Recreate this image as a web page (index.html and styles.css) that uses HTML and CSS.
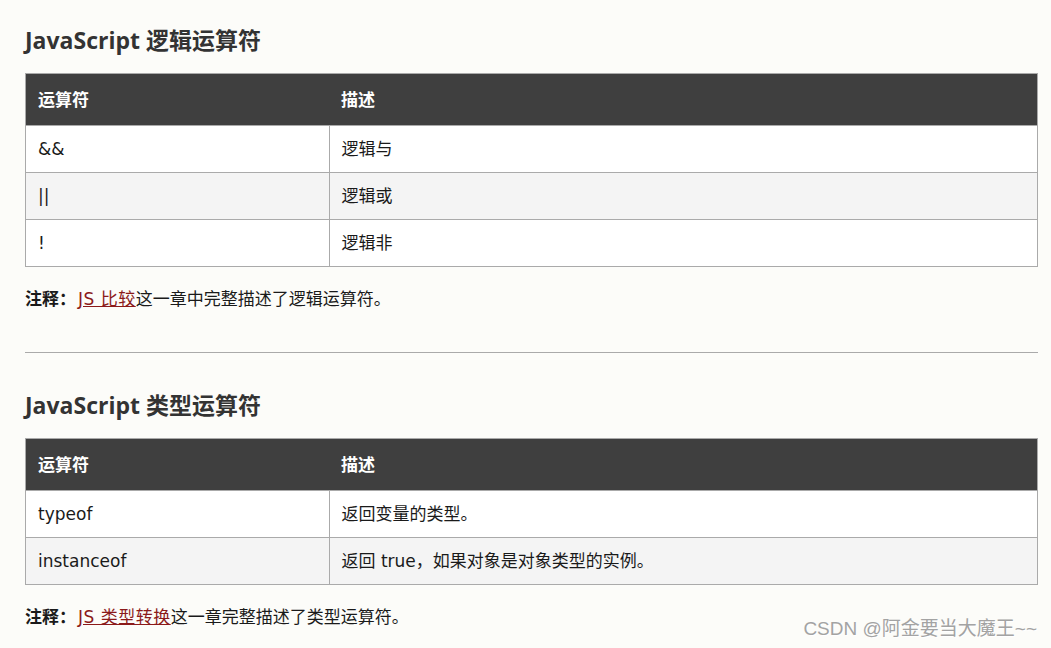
FILE: index.html
```html
<!DOCTYPE html>
<html lang="zh-CN">
<head>
<meta charset="utf-8">
<title>JavaScript 运算符</title>
<link rel="stylesheet" href="styles.css">
</head>
<body>
<main class="page">
  <h2 class="title">JavaScript 逻辑运算符</h2>
  <table class="ops">
    <thead>
      <tr><th class="col-op">运算符</th><th>描述</th></tr>
    </thead>
    <tbody>
      <tr><td>&amp;&amp;</td><td>逻辑与</td></tr>
      <tr class="alt"><td>||</td><td>逻辑或</td></tr>
      <tr><td>!</td><td>逻辑非</td></tr>
    </tbody>
  </table>
  <p class="note"><b>注释：</b><a href="#" class="link">JS 比较</a>这一章中完整描述了逻辑运算符。</p>
  <hr class="sep">
  <h2 class="title">JavaScript 类型运算符</h2>
  <table class="ops">
    <thead>
      <tr><th class="col-op">运算符</th><th>描述</th></tr>
    </thead>
    <tbody>
      <tr><td>typeof</td><td>返回变量的类型。</td></tr>
      <tr class="alt"><td>instanceof</td><td>返回 true，如果对象是对象类型的实例。</td></tr>
    </tbody>
  </table>
  <p class="note"><b>注释：</b><a href="#" class="link">JS 类型转换</a>这一章完整描述了类型运算符。</p>
</main>
<div class="watermark">CSDN @阿金要当大魔王~~</div>
</body>
</html>
```

FILE: styles.css
```css
html, body {
  margin: 0;
  padding: 0;
  background: #fcfcf9;
}
body {
  font-family: "DejaVu Sans", "Noto Sans CJK SC", sans-serif;
  font-size: 17px;
  color: #1a1a1a;
  height: 648px;
  overflow: hidden;
  position: relative;
}
.page {
  padding: 22px 13px 0 25px;
}
.title {
  margin: 0 0 15px;
  font-family: "Open Sans", "Noto Sans CJK SC", sans-serif;
  font-size: 23px;
  line-height: 36px;
  font-weight: 700;
  color: #333;
}
.ops {
  width: 100%;
  border-collapse: collapse;
  border: 1px solid #aaa;
}
.ops th {
  background: #3f3f3f;
  color: #fff;
  font-weight: 700;
  text-align: left;
  padding: 14px 12px 13px;
  line-height: 24px;
  font-size: 17px;
}
.ops th.col-op {
  width: 279px;
}
.ops td {
  background: #fff;
  padding: 11px 12px 11px;
  line-height: 24px;
  border: 1px solid #aaa;
  color: #1a1a1a;
}
.ops tr.alt td {
  background: #f4f4f4;
}
.note {
  margin: 20px 0 0;
  line-height: 24px;
  color: #1a1a1a;
}
.note b {
  font-weight: 700;
  margin-right: 2px;
}
.link {
  color: #8b1a1a;
  text-decoration: underline;
  text-decoration-color: #8b1a1a;
  letter-spacing: 0.5px;
}
.sep {
  margin: 41px 0 34px;
  border: 0;
  border-top: 1px solid #aaa;
  height: 0;
}
.watermark {
  position: absolute;
  right: 14px;
  top: 616px;
  font-family: "Liberation Sans", "Noto Sans CJK SC", sans-serif;
  font-size: 19px;
  line-height: 26px;
  color: #a3a3a3;
  text-shadow: 1px 1px 0 #fff;
}
```
